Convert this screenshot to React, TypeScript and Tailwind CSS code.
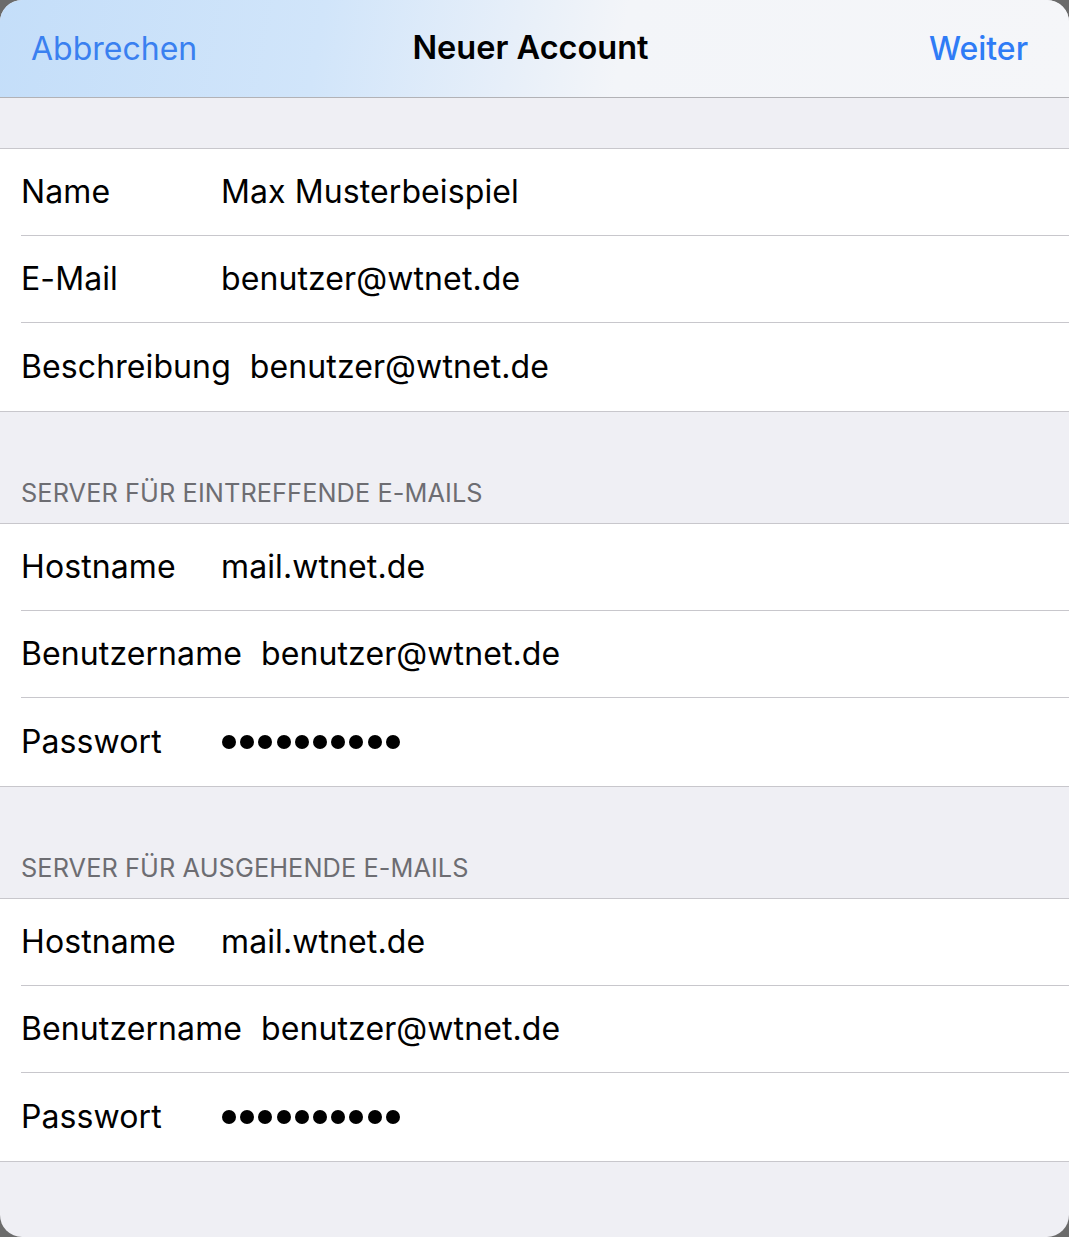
import React from "react";

const FONT = { fontFamily: 'Inter, "Noto Sans", sans-serif' };

type Row = { label: string; value: string; password?: boolean };

function Group({ rows }: { rows: Row[] }) {
  return (
    <div className="bg-white border-y border-[#c8c7cc]">
      {rows.map((r, i) => (
        <div key={i} className="pl-[21px]">
          <div
            className={
              "flex items-center text-[32px] text-black tracking-[0.1px] " +
              (i < rows.length - 1 ? "h-[87px] border-b border-[#c8c7cc]" : "h-[88px]")
            }
          >
            <span className="min-w-[200px] pr-[19px]">{r.label}</span>
            {r.password ? (
              <span className="flex gap-[4.2px] items-center pl-[1px]">
                {Array.from({ length: 10 }).map((_, k) => (
                  <span key={k} className="w-[14px] h-[14px] rounded-full bg-black inline-block" />
                ))}
              </span>
            ) : (
              <span>{r.value}</span>
            )}
          </div>
        </div>
      ))}
    </div>
  );
}

function SectionHeader({ text }: { text: string }) {
  return (
    <div className="h-[111px] flex items-end pb-[11px] pl-[21px] text-[25.3px] text-[#6d6d72] tracking-[0.1px]">
      {text}
    </div>
  );
}

export default function App() {
  return (
    <div className="w-[1069px] h-[1237px] bg-[#6b6b6b]" style={FONT}>
      <div className="w-full h-full rounded-[22px] overflow-hidden bg-[#efeff4] flex flex-col">
        <div className="h-[98px] border-b border-[#b2b2b6] bg-[linear-gradient(100deg,#c4def9_0%,#d1e5fa_30%,#e7eff9_48%,#f3f5f9_58%,#f5f6f9_100%)] flex items-center justify-between pl-[31px] pr-[41px] relative">
          <span className="text-[32px] text-[#3a80f0]">Abbrechen</span>
          <span className="absolute left-0 right-0 pr-[8px] text-center text-[32.5px] font-semibold text-black pointer-events-none">
            Neuer Account
          </span>
          <span className="text-[32px] text-[#2f7cf6] font-medium">Weiter</span>
        </div>
        <div className="h-[50px]" />
        <Group
          rows={[
            { label: "Name", value: "Max Musterbeispiel" },
            { label: "E-Mail", value: "benutzer@wtnet.de" },
            { label: "Beschreibung", value: "benutzer@wtnet.de" },
          ]}
        />
        <SectionHeader text="SERVER FÜR EINTREFFENDE E-MAILS" />
        <Group
          rows={[
            { label: "Hostname", value: "mail.wtnet.de" },
            { label: "Benutzername", value: "benutzer@wtnet.de" },
            { label: "Passwort", value: "", password: true },
          ]}
        />
        <SectionHeader text="SERVER FÜR AUSGEHENDE E-MAILS" />
        <Group
          rows={[
            { label: "Hostname", value: "mail.wtnet.de" },
            { label: "Benutzername", value: "benutzer@wtnet.de" },
            { label: "Passwort", value: "", password: true },
          ]}
        />
      </div>
    </div>
  );
}
